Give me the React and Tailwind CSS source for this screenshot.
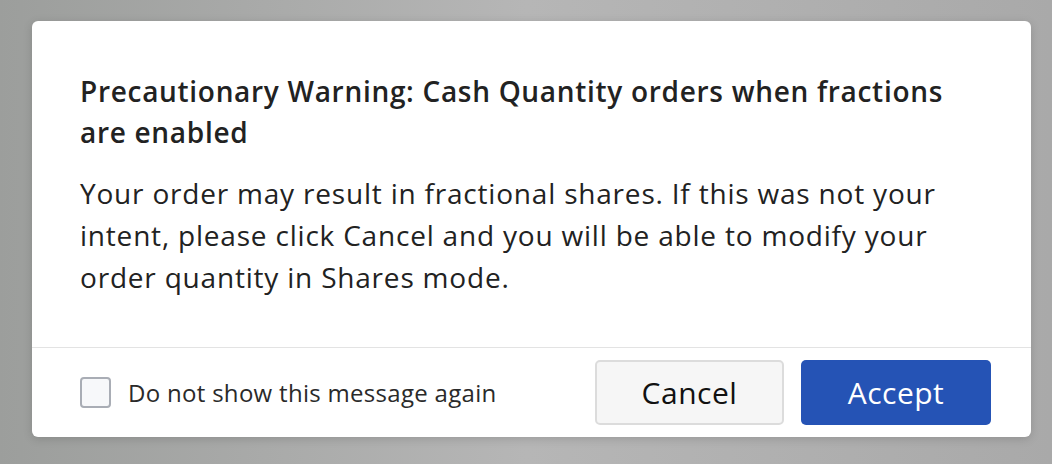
export default function App() {
  return (
    <div
      className="w-[1052px] h-[464px] bg-[#b3b3b3] bg-gradient-to-r from-[#9c9e9c] via-[#b6b6b6] to-[#a9a9a9] pt-[21px] pl-[32px]"
      style={{ fontFamily: '"Open Sans", sans-serif' }}
    >
      <div className="w-[999px] h-[416px] bg-white rounded-[6px] flex flex-col shadow-[0_2px_10px_rgba(0,0,0,0.15)]">
        <div className="flex-1 pl-[48px] pt-[50px]">
          <div className="w-[880px]">
            <h2 className="text-[28px] leading-[41px] font-semibold tracking-[0.7px] text-[#222]">
              Precautionary Warning: Cash Quantity orders when fractions are enabled
            </h2>
            <p className="mt-[19px] text-[28px] leading-[42px] tracking-[0.8px] text-[#222]">
              Your order may result in fractional shares. If this was not your intent, please click Cancel and you will be able to modify your order quantity in Shares mode.
            </p>
          </div>
        </div>
        <div className="h-[90px] border-t border-[#e3e3e3] flex items-center justify-between pl-[48px] pr-[40px]">
          <label className="flex items-center gap-[17px]">
            <span className="w-[31px] h-[31px] rounded-[4px] border-2 border-[#a9adb5] bg-[#f7f8fa]"></span>
            <span className="text-[24px] tracking-[0.3px] text-[#2a2a2a]">Do not show this message again</span>
          </label>
          <div className="flex items-center gap-[17px]">
            <button className="w-[189px] h-[65px] rounded-[5px] border-2 border-[#dcdcdc] bg-[#f6f6f6] text-[30px] tracking-[0.5px] text-[#111]">
              Cancel
            </button>
            <button className="w-[190px] h-[65px] rounded-[5px] bg-[#2553b5] text-[30px] tracking-[0.5px] text-white">
              Accept
            </button>
          </div>
        </div>
      </div>
    </div>
  );
}
